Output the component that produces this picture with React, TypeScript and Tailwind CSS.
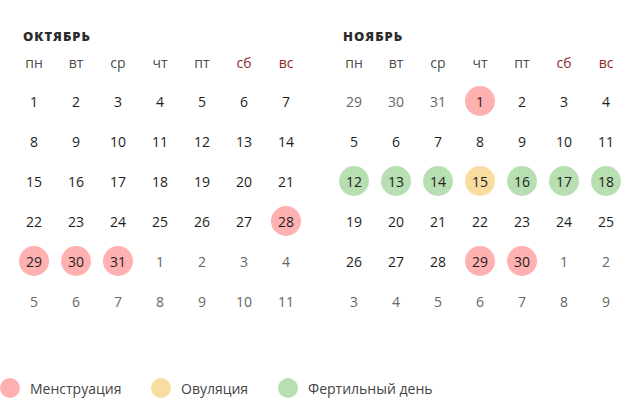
import React from 'react';

type Mark = 'men' | 'ovu' | 'fer' | undefined;

interface Day {
  n: number;
  other?: boolean;
  mark?: Mark;
}

interface Month {
  title: string;
  days: Day[];
}

const weekDays = ['пн', 'вт', 'ср', 'чт', 'пт', 'сб', 'вс'];

const range = (a: number, b: number, other = false): Day[] =>
  Array.from({ length: b - a + 1 }, (_, i) => ({ n: a + i, other }));

const withMarks = (days: Day[], marks: Record<number, Mark>) =>
  days.map((d) => (d.other ? d : { ...d, mark: marks[d.n] }));

const october: Month = {
  title: 'Октябрь',
  days: [
    ...withMarks(range(1, 31), { 28: 'men', 29: 'men', 30: 'men', 31: 'men' }),
    ...range(1, 11, true),
  ],
};

const november: Month = {
  title: 'Ноябрь',
  days: [
    ...range(29, 31, true),
    ...withMarks(range(1, 30), {
      1: 'men',
      12: 'fer',
      13: 'fer',
      14: 'fer',
      15: 'ovu',
      16: 'fer',
      17: 'fer',
      18: 'fer',
      29: 'men',
      30: 'men',
    }),
    ...range(1, 9, true),
  ],
};

const markBg: Record<string, string> = {
  men: 'bg-[#ffb1b1]',
  ovu: 'bg-[#f9dc9f]',
  fer: 'bg-[#b8dfb1]',
};

const MonthGrid: React.FC<{ month: Month }> = ({ month }) => (
  <div className="w-[320px] pl-[13px]">
    {/* month title */}
    <div className="ml-[10px] h-[16px] text-[13px] leading-[16px] font-extrabold uppercase tracking-[1px] text-[#2b2b2b]">
      {month.title}
    </div>
    <div className="mt-[8px] grid grid-cols-[repeat(7,42px)]">
      {weekDays.map((w, i) => (
        <div
          key={w}
          className={`h-[20px] flex items-center justify-center text-[14px] ${
            i >= 5 ? 'text-[#8a2a2a]' : 'text-[#4d4d4d]'
          }`}
        >
          {w}
        </div>
      ))}
    </div>
    <div className="mt-[9px] grid grid-cols-[repeat(7,42px)] auto-rows-[40px]">
      {month.days.map((d, idx) => (
        <div key={idx} className="flex items-center justify-center">
          <span
            className={`w-[30px] h-[30px] rounded-full flex items-center justify-center text-[14px] ${
              d.mark ? markBg[d.mark] : ''
            } ${d.other ? 'text-[#666]' : 'text-[#1e1e1e]'}`}
          >
            {d.n}
          </span>
        </div>
      ))}
    </div>
  </div>
);

const LegendItem: React.FC<{ color: string; label: string; width: string }> = ({
  color,
  label,
  width,
}) => (
  <div className={`flex items-center ${width}`}>
    <span className={`w-[20px] h-[20px] rounded-full ${color}`} />
    <span className="ml-[10px] text-[14px] text-[#444]">{label}</span>
  </div>
);

export default function App() {
  return (
    <div
      className="w-[640px] h-[413px] bg-white overflow-hidden pt-[28px]"
      style={{ fontFamily: '"Open Sans", "Noto Sans", sans-serif' }}
    >
      <div className="flex">
        <MonthGrid month={october} />
        <MonthGrid month={november} />
      </div>
      <div className="mt-[57px] flex h-[20px]">
        <LegendItem color="bg-[#ffb1b1]" label="Менструация" width="w-[151px]" />
        <LegendItem color="bg-[#f9dc9f]" label="Овуляция" width="w-[127px]" />
        <LegendItem color="bg-[#b8dfb1]" label="Фертильный день" width="w-[200px]" />
      </div>
    </div>
  );
}
